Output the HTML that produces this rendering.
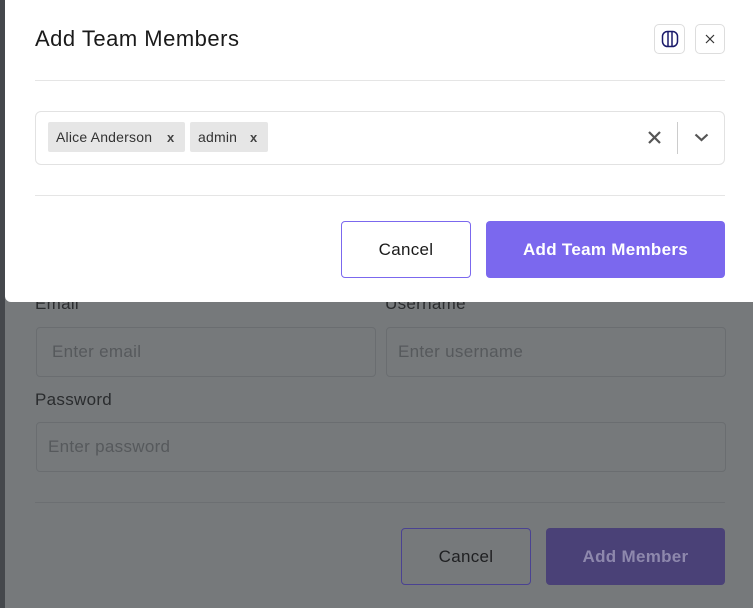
<!DOCTYPE html>
<html><head><style>
*{box-sizing:border-box;margin:0;padding:0}
body{width:753px;height:608px;overflow:hidden;background:#76797b;font-family:"Liberation Sans",sans-serif;position:relative}
.a{position:absolute}
.strip{left:0;top:0;width:5px;height:608px;background:#45484c}
.lbl{font-size:17px;color:#2a2c2e;letter-spacing:0.3px}
.inp{border:1px solid #6a6d70;border-radius:4px;font-size:17px;color:#56595c;padding-left:15px;display:flex;align-items:center;letter-spacing:0.3px}
.modal{left:5px;top:0;width:748px;height:302px;background:#fff;border-radius:0 0 0 6px}
.btn{display:flex;align-items:center;justify-content:center;border-radius:4px;font-size:17px;letter-spacing:0.3px}
.tag{background:#e6e6e6;border-radius:2px;height:30px;top:122px;font-size:14px;color:#333;display:flex;align-items:center;padding-left:8px;letter-spacing:0.2px}
.tag b{font-size:13px;color:#444;position:absolute}
</style></head><body>
<div class="a strip"></div>
<div class="a lbl" style="left:35px;top:294px">Email</div>
<div class="a lbl" style="left:385px;top:294px">Username</div>
<div class="a inp" style="left:36px;top:327px;width:340px;height:50px">Enter email</div>
<div class="a inp" style="left:386px;top:327px;width:340px;height:50px;padding-left:11px">Enter username</div>
<div class="a lbl" style="left:35px;top:390px">Password</div>
<div class="a inp" style="left:36px;top:422px;width:690px;height:50px;padding-left:11px">Enter password</div>
<div class="a" style="left:35px;top:502px;width:690px;height:1px;background:#6c6f72"></div>
<div class="a btn" style="left:401px;top:528px;width:130px;height:57px;border:1px solid #4a4292;color:#1f2022">Cancel</div>
<div class="a btn" style="left:546px;top:528px;width:179px;height:57px;background:#4a4177;color:#8e88ad;font-weight:bold">Add Member</div>

<div class="a modal">
<div class="a" style="left:30px;top:26px;font-size:22px;color:#1a1a1a;letter-spacing:0.5px">Add Team Members</div>
<div class="a" style="left:649px;top:24px;width:31px;height:30px;border:1px solid #ddd;border-radius:5px;display:flex;align-items:center;justify-content:center">
<svg width="18" height="18" viewBox="0 0 18 18" fill="none" stroke="#1a1a6a" stroke-width="1.5"><rect x="1.5" y="1.5" width="15" height="15" rx="5"/><line x1="7" y1="2" x2="7" y2="16"/><line x1="11" y1="2" x2="11" y2="16"/></svg></div>
<div class="a" style="left:690px;top:24px;width:30px;height:30px;border:1px solid #ddd;border-radius:5px;display:flex;align-items:center;justify-content:center">
<svg width="10" height="10" viewBox="0 0 10 10" stroke="#333" stroke-width="1.2"><line x1="1" y1="1" x2="9" y2="9"/><line x1="9" y1="1" x2="1" y2="9"/></svg></div>
<div class="a" style="left:30px;top:80px;width:690px;height:1px;background:#e5e5e5"></div>
<div class="a" style="left:30px;top:111px;width:690px;height:54px;border:1px solid #e2e2e2;border-radius:6px"></div>
<div class="a tag" style="left:43px;width:137px">Alice Anderson<b style="left:119px">x</b></div>
<div class="a tag" style="left:185px;width:78px">admin<b style="left:60px">x</b></div>
<svg class="a" style="left:643px;top:131px" width="13" height="13" viewBox="0 0 13 13" stroke="#555" stroke-width="2.2"><line x1="1" y1="1" x2="12" y2="12"/><line x1="12" y1="1" x2="1" y2="12"/></svg>
<div class="a" style="left:672px;top:122px;width:1px;height:32px;background:#ccc"></div>
<svg class="a" style="left:689px;top:133px" width="15" height="9" viewBox="0 0 15 9" fill="none" stroke="#555" stroke-width="2.2"><polyline points="1.5,1.5 7.5,7 13.5,1.5"/></svg>
<div class="a" style="left:30px;top:195px;width:690px;height:1px;background:#e5e5e5"></div>
<div class="a btn" style="left:336px;top:221px;width:130px;height:57px;border:1px solid #7b68ee;color:#1a1a1a">Cancel</div>
<div class="a btn" style="left:481px;top:221px;width:239px;height:57px;background:#7b68ee;color:#fff;font-weight:bold">Add Team Members</div>
</div>
</body></html>
